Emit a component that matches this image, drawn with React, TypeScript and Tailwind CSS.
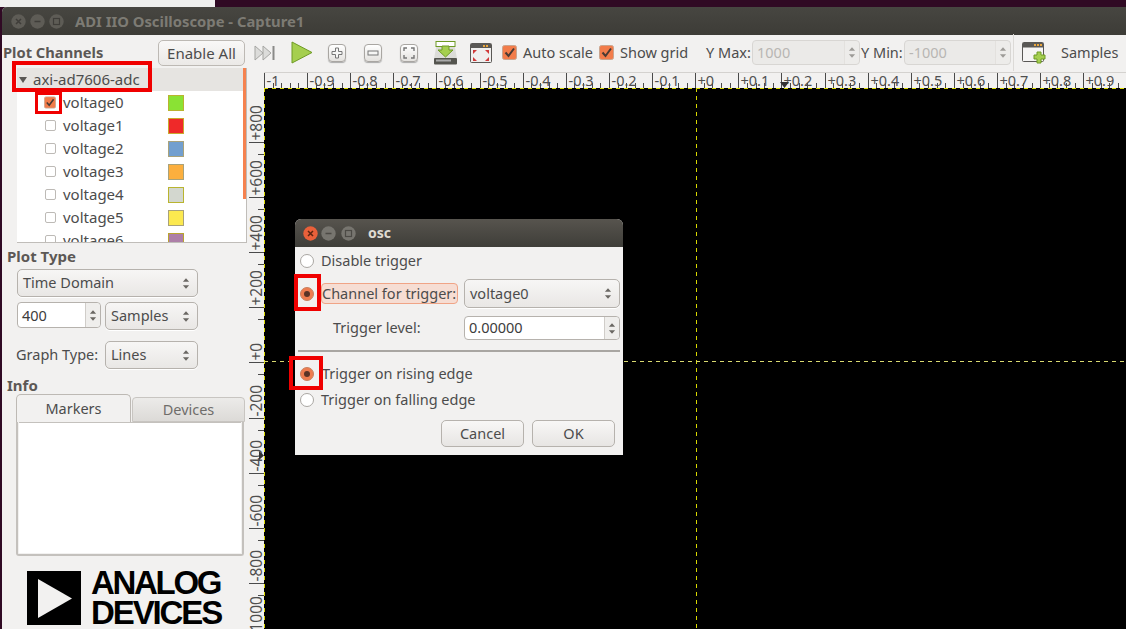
import React from "react";

const Updown = ({ cls = "" }: { cls?: string }) => (
  <svg width="8" height="13" viewBox="0 0 9 14" className={cls}>
    <path d="M4.5 1 L8 5 H1 Z" fill="#6a6763" />
    <path d="M4.5 13 L8 9 H1 Z" fill="#6a6763" />
  </svg>
);

const Combo = ({ label, w, h = 28, pl = 5 }: { label: string; w: string; h?: number; pl?: number }) => (
  <div
    className={`${w} flex items-center justify-between rounded-[5px] border border-[#b6b2ad] bg-gradient-to-b from-[#f7f6f5] to-[#e9e7e5] pr-[7px] shadow-[0_1px_0_#ffffff]`}
    style={{ height: h, paddingLeft: pl }}
  >
    <span className={h === 28 ? "mb-[2px]" : ""}>{label}</span>
    <Updown />
  </div>
);

const Spin = ({ value, w, h, disabled, lift }: { value: string; w: string; h: string; disabled?: boolean; lift?: boolean }) => (
  <div
    className={`${w} ${h} flex rounded-[4px] border ${
      disabled ? "border-[#d8d6d3] bg-[#ebeae8] text-[#b8b6b3]" : "border-[#b6b2ad] bg-white text-[#3c3c3c]"
    }`}
  >
    <div className={`flex flex-1 items-center pl-[4px] ${lift ? "pb-[2px]" : ""}`}>{value}</div>
    <div
      className={`flex w-[15px] flex-col items-center justify-center rounded-r-[4px] border-l ${
        disabled ? "border-[#dedcd9] bg-[#efeeec] opacity-60" : "border-[#d0cdc9] bg-[#efeeec]"
      }`}
    >
      <Updown />
    </div>
  </div>
);

const Check = ({ cls = "" }: { cls?: string }) => (
  <svg width="15" height="15" viewBox="0 0 15 15" className={cls}>
    <rect x="0.5" y="0.5" width="14" height="14" rx="2" fill="#f27c4a" stroke="#c9a58f" />
    <path d="M3.5 7.5 L6.5 11 L12 3.5" fill="none" stroke="#4a3a33" strokeWidth="2" />
  </svg>
);

const Radio = ({ on, cls = "" }: { on?: boolean; cls?: string }) => (
  <svg width="14" height="14" viewBox="0 0 14 14" className={cls}>
    <circle cx="7" cy="7" r="6.5" fill={on ? "#ee7c4f" : "#ffffff"} stroke={on ? "#c9805f" : "#a9a6a2"} />
    {on && <circle cx="7" cy="7" r="3" fill="#5a3326" />}
  </svg>
);

const Channel = ({ name, color, border, on }: { name: string; color: string; border: string; on?: boolean }) => (
  <div className="flex h-[23px] items-center">
    <div className="ml-[27px] flex w-[12px] justify-center">
      {on ? (
        <Check />
      ) : (
        <div className="h-[11px] w-[11px] shrink-0 rounded-[2px] border border-[#bdbab6] bg-white" />
      )}
    </div>
    <span className="ml-[7px] w-[105px]">{name}</span>
    <div className="h-[16px] w-[16px] border-[1.5px]" style={{ background: color, borderColor: border }} />
  </div>
);

const IconButton = ({ children, cls = "" }: { children: React.ReactNode; cls?: string }) => (
  <div
    className={`flex h-[18px] w-[18px] shrink-0 items-center justify-center rounded-[4px] border border-[#a9a6a2] bg-gradient-to-b from-[#ffffff] to-[#e4e2df] shadow-[0_1px_1px_#aaa] ${cls}`}
  >
    {children}
  </div>
);

const TopRuler = () => {
  const labels = ["-1", "-0.9", "-0.8", "-0.7", "-0.6", "-0.5", "-0.4", "-0.3", "-0.2", "-0.1", "+0", "+0.1", "+0.2", "+0.3", "+0.4", "+0.5", "+0.6", "+0.7", "+0.8", "+0.9"];
  const step = 43.12;
  return (
    <svg width="862" height="16" className="block bg-[#f2f1f0]">
      <path d="M0 0.5 H862" stroke="#d4d2cf" />
      {labels.map((l, i) => {
        const x = Math.round(i * step) + 0.5;
        return (
          <g key={l}>
            <path d={`M${x} 1 V16`} stroke="#4a4a4a" />
            {[1, 2, 3, 4].map((k) => (
              <path
                key={k}
                d={`M${Math.round(i * step + (k * step) / 5) + 0.5} 11 V16`}
                stroke="#4a4a4a"
              />
            ))}
            <text x={x + 2} y="14" fontSize="14.5" fill="#4f4f4f">
              {l}
            </text>
          </g>
        );
      })}
      <path d="M516 10 h9 l-4.5 6 z" fill="#333" />
    </svg>
  );
};

const LeftRuler = () => {
  const labels = ["+800", "+600", "+400", "+200", "+0", "-200", "-400", "-600", "-800", "-1000"];
  return (
    <svg width="15" height="541" className="block shrink-0 bg-[#f2f1f0]">
      {labels.map((l, i) => {
        const y = Math.round(54 + i * 55.1) + 0.5;
        return (
          <g key={l}>
            <path d={`M0 ${y} H15`} stroke="#4a4a4a" />
            <path d={`M9 ${y + 12} H15`} stroke="#4a4a4a" />
            <text transform={`translate(13 ${y - 2}) rotate(-90)`} fontSize="15.5" fill="#4f4f4f">
              {l}
            </text>
          </g>
        );
      })}
      <path d="M10 363 v9 l5 -4.5 z" fill="#333" />
    </svg>
  );
};

const Plot = () => (
  <svg width="862" height="541" className="block bg-black">
    <path d="M0 0.5 H862" stroke="#d8d800" strokeDasharray="4 4" />
    <path d="M0.5 0 V541" stroke="#d8d800" strokeDasharray="4 4" />
    <path d="M432.5 0 V541" stroke="#d8d800" strokeDasharray="4 4" />
    <path d="M0 273.5 H862" stroke="#d8d870" strokeDasharray="4 4" />
  </svg>
);

const WinBtn = ({ kind, active }: { kind: "x" | "min" | "max"; active?: boolean }) => {
  const glyph = active ? "#4c4a45" : "#3f3d39";
  return (
    <svg width="15" height="15" viewBox="0 0 15 15">
      <circle cx="7.5" cy="7.5" r="7.2" fill={active && kind === "x" ? "#e9603a" : active ? "#77756f" : "#5e5c56"} />
      {kind === "x" && <path d="M5 5 L10 10 M10 5 L5 10" stroke={active ? "#5c2410" : glyph} strokeWidth="1.5" />}
      {kind === "min" && <path d="M4.5 7.5 H10.5" stroke={glyph} strokeWidth="1.5" />}
      {kind === "max" && <rect x="4.5" y="4.5" width="6" height="6" fill="none" stroke={glyph} strokeWidth="1.2" />}
    </svg>
  );
};

const Dialog = () => (
  <div className="absolute left-[295px] top-[219px] h-[236px] w-[328px] overflow-hidden rounded-t-[6px] bg-[#f2f1f0] text-[#4c4c4c]">
    <div className="flex h-[28px] items-center bg-gradient-to-b from-[#57544e] to-[#3f3e39] pl-[8px]">
      <WinBtn kind="x" active />
      <span className="ml-[3px] flex"><WinBtn kind="min" active /></span>
      <span className="ml-[5px] flex"><WinBtn kind="max" active /></span>
      <span className="ml-[12px] mb-[2px] text-[14px] font-bold text-[#dfdbd2]">osc</span>
    </div>
    <div className="flex h-[28px] items-center">
      <Radio cls="ml-[5px]" />
      <span className="mb-[2px] ml-[7px]">Disable trigger</span>
    </div>
    <div className="mt-[4px] flex h-[29px] items-center">
      <Radio on cls="ml-[5px]" />
      <span className="ml-[7px] flex h-[21px] w-[137px] items-center whitespace-nowrap rounded-[4px] border border-[#f0a486] bg-[#f6ddd3] text-[#4c4c4c]">
        Channel for trigger:
      </span>
      <div className="ml-[6px]">
        <Combo label="voltage0" w="w-[156px]" h={29} pl={5} />
      </div>
    </div>
    <div className="mt-[8px] flex h-[24px] items-center">
      <span className="mb-[2px] ml-[38px] w-[131px]">Trigger level:</span>
      <Spin value="0.00000" w="w-[156px]" h="h-[24px]" lift />
    </div>
    <div className="mx-[3px] mt-[10px] h-[2px] bg-[#a9a6a2]" />
    <div className="mt-[9px] flex h-[26px] items-center">
      <Radio on cls="ml-[5px]" />
      <span className="mb-[2px] ml-[8px]">Trigger on rising edge</span>
    </div>
    <div className="flex h-[26px] items-center">
      <Radio cls="ml-[5px]" />
      <span className="mb-[2px] ml-[7px]">Trigger on falling edge</span>
    </div>
    <div className="mt-[7px] flex justify-end gap-[8px] pr-[8px]">
      <div className="flex h-[27px] w-[83px] items-center justify-center rounded-[5px] border border-[#b6b2ad] bg-gradient-to-b from-[#f8f7f6] to-[#e7e5e3]">Cancel</div>
      <div className="flex h-[27px] w-[83px] items-center justify-center rounded-[5px] border border-[#b6b2ad] bg-gradient-to-b from-[#f8f7f6] to-[#e7e5e3]">OK</div>
    </div>
  </div>
);

export default function App() {
  return (
    <div className="relative h-[629px] w-[1126px] overflow-hidden bg-[#300a24] font-['Noto_Sans',sans-serif] text-[14.5px] leading-[13px] text-[#4c4c4c]">
      <div className="flex h-[7px]">
        <div className="h-full w-[215px] bg-[#efefee]" />
      </div>
      <div className="ml-[2px] flex h-[622px] flex-col overflow-hidden rounded-tl-[5px] bg-[#f2f1f0]">
        <div className="flex h-[28px] shrink-0 items-center bg-gradient-to-b from-[#474641] to-[#3d3c37] pl-[9px]">
          <WinBtn kind="x" />
          <span className="ml-[4px] flex"><WinBtn kind="min" /></span>
          <span className="ml-[4px] flex"><WinBtn kind="max" /></span>
          <span className="ml-[11px] text-[14.8px] font-bold text-[#7d7b74]">ADI IIO Oscilloscope - Capture1</span>
        </div>
        <div className="flex flex-1">
          {/* left column */}
          <div className="flex w-[247px] shrink-0 flex-col">
            <div className="flex h-[33px] items-center justify-between pr-[4px]">
              <span className="ml-[1px] mt-[2px] text-[14.7px] font-bold text-[#5c5855]">Plot Channels</span>
              <div className="mt-[3px] flex h-[26px] w-[87px] items-center justify-center rounded-[5px] border border-[#bdb9b4] bg-gradient-to-b from-[#f9f8f7] to-[#ebe9e7] text-[15px]">
                Enable All
              </div>
            </div>
            <div className="relative ml-[15px] h-[175px] w-[230px] overflow-hidden border-b border-r border-[#c0bdb9] bg-white text-[15px]">
              <div className="flex h-[23px] items-center bg-[#e6e4e1] pl-[2px]">
                <svg width="8" height="8" viewBox="0 0 8 8"><path d="M0 1 H8 L4 7 Z" fill="#5a5855" /></svg>
                <span className="ml-[6px]">axi-ad7606-adc</span>
              </div>
              <Channel name="voltage0" color="#8ae234" border="#b9b42f" on />
              <Channel name="voltage1" color="#ef2929" border="#c9a92f" />
              <Channel name="voltage2" color="#729fcf" border="#a9a27a" />
              <Channel name="voltage3" color="#fcaf3e" border="#a9a27a" />
              <Channel name="voltage4" color="#d3d7cf" border="#b9b42f" />
              <Channel name="voltage5" color="#fce94f" border="#a9a27a" />
              <Channel name="voltage6" color="#ad7fa8" border="#b9a42f" />
              <div className="absolute right-0 top-0 h-[131px] w-[3px] bg-[#f5824f]" />
            </div>
            <div className="ml-[5px] mt-[5px] flex h-[18px] items-center pb-[2px] text-[15px] font-bold text-[#5c5855]">Plot Type</div>
            <div className="ml-[15px] mt-[3px]">
              <Combo label="Time Domain" w="w-[181px]" />
            </div>
            <div className="ml-[15px] mt-[5px] flex gap-[4px]">
              <Spin value="400" w="w-[84px]" h="h-[26px]" />
              <Combo label="Samples" w="w-[93px]" />
            </div>
            <div className="ml-[14px] mt-[11px] flex items-center">
              <span className="mb-[2px] w-[89px]">Graph Type:</span>
              <Combo label="Lines" w="w-[93px]" />
            </div>
            <div className="ml-[5px] mt-[8px] flex h-[18px] items-center pb-[2px] text-[15px] font-bold text-[#5c5855]">Info</div>
            <div className="z-10 -mt-[1px] ml-[14px] flex h-[28px] items-end gap-[1px]">
              <div className="flex h-[28px] w-[115px] items-center justify-center rounded-t-[5px] border border-b-0 border-[#bdb9b4] bg-[#f2f1f0]">Markers</div>
              <div className="flex h-[25px] w-[113px] items-center justify-center rounded-t-[4px] border border-[#c8c5c1] bg-gradient-to-b from-[#ecebe9] to-[#dcdad7] text-[#6f6d6a]">Devices</div>
            </div>
            <div className="ml-[14px] h-[134px] w-[228px] rounded-b-[3px] border-[2px] border-t-0 border-[#c4c1bd] p-[1px] pt-0">
              <div className="h-full border-t border-[#c4c1bd] bg-white" />
            </div>
            <div className="ml-[25px] mt-[15px] flex">
              <svg width="54" height="54" viewBox="0 0 54 54" className="shrink-0">
                <rect width="54" height="54" fill="#000" />
                <path d="M11 8 L45 27.5 L11 47 Z" fill="#f2f1f0" />
              </svg>
              <div className="-mt-[1px] ml-[10px] flex flex-col font-['Liberation_Sans',sans-serif] text-[33px] font-bold text-black">
                <span className="block h-[30px] leading-[26px] tracking-[-2.3px]">ANALOG</span>
                <span className="block h-[26px] leading-[26px] tracking-[-2.1px]">DEVICES</span>
              </div>
            </div>
          </div>
          {/* right column */}
          <div className="flex min-w-0 flex-1 flex-col">
            <div className="flex h-[37px] shrink-0 items-center pb-[2px]">
              <svg width="22" height="16" viewBox="0 0 22 16" className="ml-[5px] shrink-0">
                <path d="M1 1 L9 8 L1 15 Z M9 1 L17 8 L9 15 Z" fill="#dcdcda" stroke="#a5a5a2" />
                <rect x="18.5" y="1" width="2" height="14" fill="#8a8a88" />
              </svg>
              <svg width="22" height="23" viewBox="0 0 22 23" className="ml-[15px] shrink-0">
                <path d="M1 1 L21 11.5 L1 22 Z" fill="#a5cf4f" stroke="#6e9a24" />
              </svg>
              <IconButton cls="ml-[15px]">
                <svg width="12" height="12" viewBox="0 0 12 12"><path d="M4.5 1 H7.5 V4.5 H11 V7.5 H7.5 V11 H4.5 V7.5 H1 V4.5 H4.5 Z" fill="#f6f6f5" stroke="#777" /></svg>
              </IconButton>
              <IconButton cls="ml-[18px]">
                <svg width="12" height="6" viewBox="0 0 12 6"><rect x="1" y="1" width="10" height="4" fill="#f6f6f5" stroke="#777" /></svg>
              </IconButton>
              <IconButton cls="ml-[18px]">
                <svg width="12" height="12" viewBox="0 0 12 12"><path d="M1 4 V1 H4 M8 1 H11 V4 M11 8 V11 H8 M4 11 H1 V8" fill="none" stroke="#777" strokeWidth="1.4" /></svg>
              </IconButton>
              <svg width="25" height="24" viewBox="0 0 25 24" className="ml-[15px] shrink-0">
                <path d="M4 1 H21 L24 18 H1 Z" fill="#dcdcd8" />
                <rect x="3" y="0.5" width="19" height="5" fill="#fff" stroke="#6e9a24" />
                <rect x="1" y="17" width="23" height="6.5" rx="1" fill="#55554f" />
                <rect x="3" y="18.5" width="15" height="2" fill="#aaa" />
                <path d="M9 5 H16 V9 H20 L12.5 16 L5 9 H9 Z" fill="#a5cf4f" stroke="#6e9a24" />
              </svg>
              <svg width="22" height="20" viewBox="0 0 22 20" className="ml-[12px] shrink-0">
                <rect x="0.5" y="0.5" width="21" height="19" rx="1" fill="#f0efee" stroke="#5a5855" />
                <rect x="1" y="1" width="20" height="4" fill="#5a5855" />
                <rect x="13" y="2" width="2" height="2" fill="#e9a63c" />
                <rect x="16" y="2" width="2" height="2" fill="#e9a63c" />
                <path d="M3 7 H7 L3 11 Z M19 7 H15 L19 11 Z M3 18 H7 L3 14 Z M19 18 H15 L19 14 Z" fill="#d03a3a" />
              </svg>
              <Check cls="ml-[10px] shrink-0" />
              <span className="ml-[6px] w-[71px] shrink-0 whitespace-nowrap">Auto scale</span>
              <Check cls="ml-[5px] shrink-0" />
              <span className="ml-[6px] w-[69px] shrink-0 whitespace-nowrap">Show grid</span>
              <span className="ml-[17px] w-[44px] shrink-0 whitespace-nowrap">Y Max:</span>
              <div className="ml-[2px] shrink-0"><Spin value="1000" w="w-[108px]" h="h-[25px]" disabled /></div>
              <span className="ml-[1px] w-[42px] shrink-0 whitespace-nowrap">Y Min:</span>
              <div className="ml-[1px] shrink-0"><Spin value="-1000" w="w-[107px]" h="h-[25px]" disabled /></div>
              <div className="ml-[2px] h-[37px] w-[1px] shrink-0 bg-[#dcdad7]" />
              <svg width="24" height="22" viewBox="0 0 24 22" className="ml-[8px] shrink-0">
                <rect x="0.5" y="0.5" width="21" height="19" rx="1" fill="#f6f5f4" stroke="#5a5855" />
                <rect x="1" y="1" width="20" height="4.5" fill="#5a5855" />
                <rect x="12" y="2" width="2" height="2" fill="#e9a63c" />
                <rect x="15" y="2" width="2" height="2" fill="#e9a63c" />
                <rect x="18" y="2" width="2" height="2" fill="#e9a63c" />
                <path d="M15 10 H19 V13 H23 V17 H19 V21 H15 V17 H12 V13 H15 Z" fill="#a5cf4f" stroke="#6e9a24" />
              </svg>
              <span className="ml-[15px] whitespace-nowrap">Samples</span>
            </div>
            <div className="flex h-[16px] shrink-0">
              <div className="w-[15px] shrink-0" />
              <TopRuler />
            </div>
            <div className="flex flex-1 overflow-hidden">
              <LeftRuler />
              <Plot />
            </div>
          </div>
        </div>
      </div>
      <Dialog />
      {/* red annotation boxes drawn over the screenshot */}
      <div className="absolute left-[12px] top-[61px] h-[31px] w-[140px] border-[4px] border-[#f00000]" />
      <div className="absolute left-[35px] top-[92px] h-[22px] w-[27px] border-[3px] border-[#f00000]" />
      <div className="absolute left-[294px] top-[274px] h-[37px] w-[27px] border-[4px] border-[#f00000]" />
      <div className="absolute left-[289px] top-[356px] h-[34px] w-[34px] border-[4px] border-[#f00000]" />
    </div>
  );
}
